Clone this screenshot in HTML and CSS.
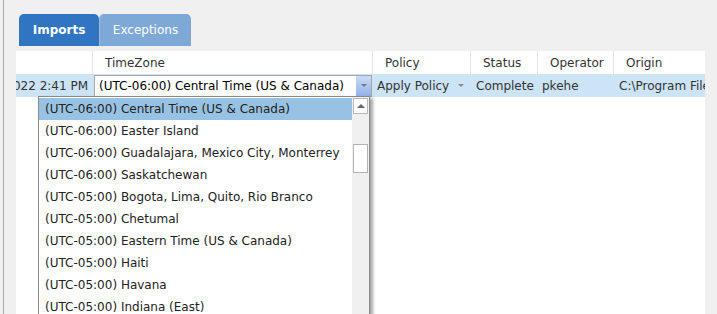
FILE: index.html
```html
<!DOCTYPE html>
<html lang="en">
<head>
  <meta charset="UTF-8">
  <title>Imports</title>
  <link rel="stylesheet" href="styles.css">
</head>
<body>

<div class="main">
  <div class="tabs">
    <div class="tab active">Imports</div>
    <div class="tab">Exceptions</div>
  </div>

  <div class="grid">
    <div class="row head">
      <div class="cell c-date"></div>
      <div class="cell c-tz">TimeZone</div>
      <div class="cell c-policy">Policy</div>
      <div class="cell c-status">Status</div>
      <div class="cell c-op">Operator</div>
      <div class="cell c-origin">Origin</div>
    </div>
    <div class="row data">
      <div class="cell c-date"><span>10/12/2022 2:41 PM</span></div>
      <div class="cell c-tz">
        <div class="select">
          <span class="select-text">(UTC-06:00) Central Time (US &amp; Canada)</span>
          <span class="select-btn"><i class="caret"></i></span>
        </div>
      </div>
      <div class="cell c-policy">Apply Policy <i class="caret"></i></div>
      <div class="cell c-status">Complete</div>
      <div class="cell c-op">pkehe</div>
      <div class="cell c-origin">C:\Program Files\Imports</div>
    </div>
  </div>
</div>

<!-- open timezone dropdown -->
<div class="dropdown">
  <ul class="options">
    <li class="selected">(UTC-06:00) Central Time (US &amp; Canada)</li>
    <li>(UTC-06:00) Easter Island</li>
    <li>(UTC-06:00) Guadalajara, Mexico City, Monterrey</li>
    <li>(UTC-06:00) Saskatchewan</li>
    <li>(UTC-05:00) Bogota, Lima, Quito, Rio Branco</li>
    <li>(UTC-05:00) Chetumal</li>
    <li>(UTC-05:00) Eastern Time (US &amp; Canada)</li>
    <li>(UTC-05:00) Haiti</li>
    <li>(UTC-05:00) Havana</li>
    <li>(UTC-05:00) Indiana (East)</li>
  </ul>
  <div class="scrollbar">
    <div class="sb-up"><i class="up"></i></div>
    <div class="sb-thumb"></div>
  </div>
</div>

</body>
</html>
```

FILE: styles.css
```css
/* Basic styling */
* { box-sizing: border-box; margin: 0; padding: 0; }
html, body { height: 100%; overflow: hidden; }
body { font-family: "DejaVu Sans", Verdana, sans-serif; font-size: 12px; color: #333; background-color: #f0f0f0; }
.main { margin-left: 3px; height: 100%; border-left: 1px solid #a9a9a9; padding-top: 14px; display: flex; flex-direction: column; }

/* Tabs */
.tabs { display: flex; margin-left: 15px; height: 32px; flex-shrink: 0; }
.tab { width: 92px; display: flex; align-items: center; justify-content: center; color: #fff; background-color: #7ea9d7; border-radius: 5px 5px 0 0; border-left: 1px solid #a3b9d0; }
.tab.active { width: 80px; background-color: #3075c2; font-weight: bold; border-left: none; }

/* Grid */
.grid { margin: 5px 0 0 12px; width: 689px; flex: 1; background-color: #fff; }
.row { display: flex; height: 23px; }
.cell { display: flex; align-items: center; white-space: nowrap; overflow: hidden; padding-left: 12px; }
.head .cell { border-left: 1px solid #e4e4e4; }
.head .cell:first-child { border-left: none; }
.data { background-color: #cde3f6; }
.data .cell { padding-left: 5px; }
.c-date { width: 76px; }
.c-tz { width: 280px; }
.c-policy { width: 98px; }
.c-status { width: 67px; }
.c-op { width: 76px; }
.c-origin { width: 92px; }
.data .c-date { justify-content: flex-end; padding: 0 4px 0 0; }
.data .c-tz { padding-left: 2px; }
.data .c-status { padding-left: 6px; }
.data .c-op { padding-left: 5px; }
.data .c-origin { padding-left: 6px; }

.select { display: flex; width: 278px; height: 22px; border: 1px solid #a6a6a6; background-color: #fff; }
.select-text { flex: 1; padding-left: 4px; line-height: 20px; color: #000; }
.select-btn { width: 15px; display: flex; align-items: center; justify-content: center; background: linear-gradient(#c9daf6, #93b3ea); }
.caret { display: inline-block; width: 0; height: 0; border-left: 3px solid transparent; border-right: 3px solid transparent; border-top: 3px solid #7a7a7a; }
.c-policy .caret { margin-left: 9px; border-top-color: #8a8a8a; }

/* Open dropdown list, runs off the bottom of the window */
.dropdown { position: absolute; left: 38px; top: 96px; bottom: 0; width: 332px; display: flex; background-color: #fff; border: 1px solid #8a8a8a; border-bottom: none; box-shadow: 3px 2px 3px rgba(0, 0, 0, 0.35); overflow: hidden; }
.options { flex: 1; list-style: none; padding-top: 1px; }
.options li { height: 22px; line-height: 22px; padding-left: 6px; color: #222; white-space: nowrap; overflow: hidden; }
.options li.selected { background-color: #98c2e3; }
.scrollbar { width: 17px; background-color: #f0f0f0; padding: 1px 1px 0 1px; }
.sb-up { height: 16px; border: 1px solid #b9b9b9; background-color: #fff; display: flex; align-items: center; justify-content: center; }
.up { width: 0; height: 0; border-left: 4px solid transparent; border-right: 4px solid transparent; border-bottom: 4px solid #666; }
.sb-thumb { height: 29px; margin-top: 30px; border: 1px solid #b3b3b3; background-color: #fff; }
```
